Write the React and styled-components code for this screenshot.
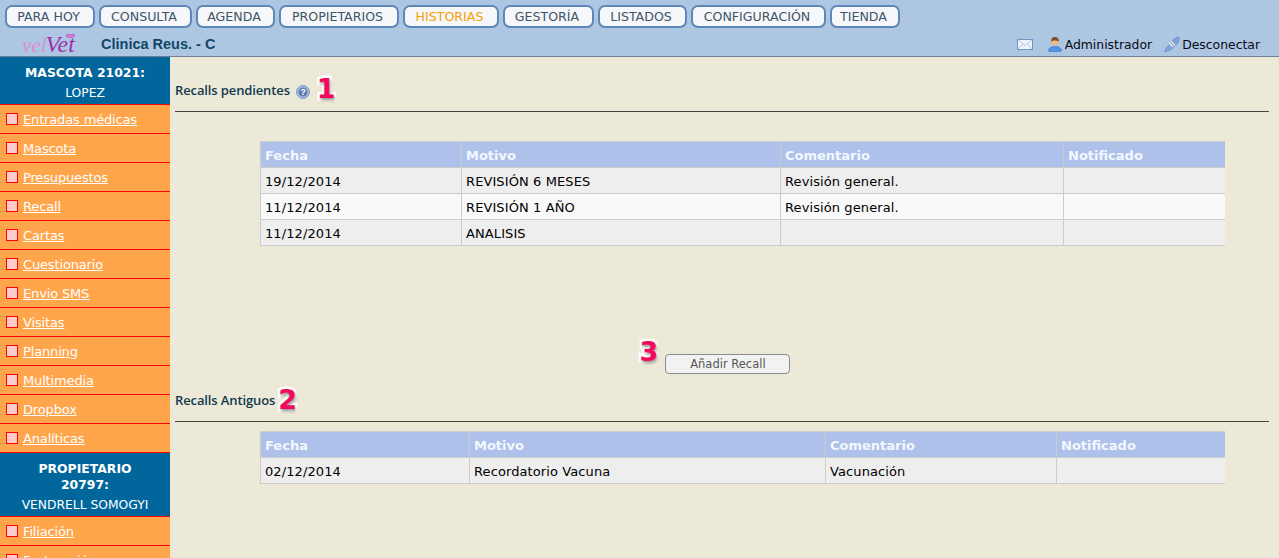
import React from "react";
import styled, { createGlobalStyle } from "styled-components";

const GlobalStyle = createGlobalStyle`
  html, body {
    margin: 0;
    padding: 0;
    height: 100%;
    overflow: hidden;
    background: #ece9d8;
    font-family: "DejaVu Sans", Verdana, sans-serif;
  }
`;

const Page = styled.div`
  height: 100vh;
  display: flex;
  flex-direction: column;
  overflow: hidden;
`;

const Header = styled.header`
  flex: none;
  height: 57px;
  box-sizing: border-box;
  background: #adc7e3;
  border-bottom: 1px solid #6b7f99;
`;

const Nav = styled.nav`
  display: flex;
  gap: 4px;
  padding: 5px 0 0 5px;
`;

const NavButton = styled.a`
  box-sizing: border-box;
  height: 23px;
  width: ${(p) => p.$w}px;
  padding-right: 3px;
  display: flex;
  align-items: center;
  justify-content: center;
  background: #f5f7fa;
  border: 2px solid #5f86b8;
  border-radius: 7px;
  font-family: "DejaVu Sans", sans-serif;
  font-size: 12.6px;
  color: ${(p) => (p.$active ? "#f5a100" : "#3f5566")};
`;

const SubBar = styled.div`
  display: flex;
  align-items: center;
  height: 28px;
  padding: 4px 19px 0 22px;
  box-sizing: border-box;
`;

const Logo = styled.div`
  position: relative;
  width: 79px;
  font-family: "Liberation Serif", serif;
  font-style: italic;
  color: #d98fd8;
  font-size: 21px;
  line-height: 24px;
  white-space: nowrap;
  span {
    color: #a02fae;
    font-size: 24px;
    margin-left: -1px;
  }
  svg {
    position: absolute;
    left: 43px;
    top: 1px;
  }
`;

const ClinicName = styled.div`
  flex: 1;
  font-family: "Liberation Sans", sans-serif;
  font-weight: 700;
  font-size: 14.5px;
  color: #0f4669;
`;

const UserLink = styled.div`
  display: flex;
  align-items: center;
  gap: ${(p) => p.$gap}px;
  margin-left: ${(p) => p.$ml}px;
  font-size: 12.4px;
  color: #0a0a14;
  svg {
    flex: none;
  }
`;

const Body = styled.div`
  flex: 1;
  display: flex;
  min-height: 0;
`;

const Sidebar = styled.aside`
  flex: none;
  width: 170px;
  background: #ffa64d;
`;

const SideTitle = styled.div`
  background: #00669c;
  color: #fff;
  text-align: center;
  padding: 8px 14px 3px;
  font-size: 12.3px;
  border-bottom: 1px solid #f00;
  strong {
    display: block;
    font-size: 12.4px;
    line-height: 16px;
    margin-bottom: 4px;
  }
  span {
    display: block;
    margin: 0 -14px;
    line-height: 16px;
  }
`;

const SideItem = styled.a`
  display: flex;
  align-items: center;
  box-sizing: border-box;
  height: 29px;
  padding-left: 6px;
  border-bottom: 1px solid #f00;
  font-size: 13px;
  letter-spacing: -0.15px;
  color: #fff;
  text-decoration: underline;
  &::before {
    content: "";
    box-sizing: border-box;
    width: 12px;
    height: 12px;
    margin-right: 5px;
    background: #ffcccc;
    border: 1px solid #f00;
  }
`;

const Content = styled.main`
  flex: 1;
  padding: 0 10px 0 5px;
  min-width: 0;
`;

const SectionHead = styled.div`
  display: flex;
  align-items: center;
  box-sizing: border-box;
  height: ${(p) => p.$h}px;
  padding: ${(p) => p.$pt}px 0 ${(p) => p.$pb}px;
  border-bottom: 1px solid #444;
  font-family: "Open Sans", sans-serif;
  font-weight: 600;
  font-size: 13px;
  letter-spacing: -0.12px;
  color: #123a4f;
`;

const Mark = styled.span`
  font-family: "DejaVu Sans", sans-serif;
  font-weight: 700;
  font-size: 27px;
  line-height: 28px;
  letter-spacing: 0;
  color: #f5095a;
  -webkit-text-stroke: 5px #fff;
  paint-order: stroke fill;
  text-shadow: 1px 2px 3px rgba(0, 0, 0, 0.45);
  margin-left: ${(p) => p.$ml}px;
  margin-top: ${(p) => p.$mt || 0}px;
`;

const HelpWrap = styled.svg`
  margin: 3px 0 0 6px;
  flex: none;
`;

const Grid = styled.table`
  border-collapse: collapse;
  table-layout: fixed;
  width: 964px;
  margin-left: 85px;
  margin-top: ${(p) => p.$mt}px;
  font-size: 13px;
  th,
  td {
    border: 1px solid #ccc;
    height: 26px;
    padding: 2px 4px 0;
    box-sizing: border-box;
    text-align: left;
    font-weight: 400;
    color: #000;
    letter-spacing: 0.1px;
  }
  th:last-child,
  td:last-child {
    border-right: none;
  }
  th {
    background: #adc1ea;
    color: #f4f7ff;
    font-weight: 700;
    letter-spacing: 0;
  }
  tbody tr:nth-child(odd) td {
    background: #eeeeee;
  }
  tbody tr:nth-child(even) td {
    background: #f9f9f9;
  }
`;

const ActionRow = styled.div`
  display: flex;
  justify-content: center;
  align-items: flex-start;
  margin-top: 92px;
  height: 42px;
  padding-right: 14px;
`;

const AddButton = styled.button`
  box-sizing: border-box;
  width: 125px;
  height: 20px;
  margin: 16px 0 0 7px;
  padding: 0;
  background: #f2f2f2;
  border: 1px solid #8c8c8c;
  border-radius: 4px;
  font-family: "DejaVu Sans", sans-serif;
  font-size: 11.5px;
  color: #555;
`;

const NAV = [
  ["PARA HOY", 90],
  ["CONSULTA", 93],
  ["AGENDA", 79],
  ["PROPIETARIOS", 120],
  ["HISTORIAS", 96, true],
  ["GESTORÍA", 91],
  ["LISTADOS", 89],
  ["CONFIGURACIÓN", 135],
  ["TIENDA", 70],
];

const PET_LINKS = [
  "Entradas médicas",
  "Mascota",
  "Presupuestos",
  "Recall",
  "Cartas",
  "Cuestionario",
  "Envio SMS",
  "Visitas",
  "Planning",
  "Multimedia",
  "Dropbox",
  "Analíticas",
];

const PENDING = [
  ["19/12/2014", "REVISIÓN 6 MESES", "Revisión general.", ""],
  ["11/12/2014", "REVISIÓN 1 AÑO", "Revisión general.", ""],
  ["11/12/2014", "ANALISIS", "", ""],
];

const OLD = [["02/12/2014", "Recordatorio Vacuna", "Vacunación", ""]];

const Lips = () => (
  <svg width="11" height="6" viewBox="0 0 11 6">
    <path d="M0.500 3C2 0.500 4 0.500 5.500 1.500 7 0.500 9 0.500 10.500 3 8.500 5.500 2.500 5.500 0.500 3z" fill="#c04fc0" />
    <path d="M2 3h7" stroke="#edc9ee" strokeWidth="0.8" />
  </svg>
);

const MailIcon = () => (
  <svg width="16" height="11" viewBox="0 0 16 11">
    <rect x="0.5" y="0.5" width="15" height="10" fill="#eef4fc" stroke="#6f94c8" />
    <path d="M1 1l7 5.500 7-5.500M1 10l5-5M15 10l-5-5" fill="none" stroke="#b4cbe9" />
  </svg>
);

const UserIcon = () => (
  <svg width="14" height="16" viewBox="0 0 14 16">
    <path d="M0.500 15c0-1 0-2 1.500-3 1-1 2.500-1.500 5-1.500s4 .5 5 1.500c1.500 1 1.500 2 1.500 3-2 1-11 1-13 0z" fill="#4f94e8" stroke="#3a6fb5" strokeWidth="0.6" />
    <circle cx="7" cy="6" r="3.500" fill="#f0b98c" />
    <path d="M3.300 5.500C3 2 4.800 1 7 1s4 1 3.700 4.500C9 4 5 4 3.300 5.500z" fill="#8a4a25" />
  </svg>
);

const PlugIcon = () => (
  <svg width="16" height="17" viewBox="0 0 16 17">
    <path d="M0.500 16L2 12l3-3 5-6 4-2.500 1.500 1.500-1.500 5-5 5-3.500 2.500z" fill="#7fa4dc" stroke="#5b7fb8" strokeWidth="0.5" />
    <path d="M5 7l4 4M7 5.500l4 4" stroke="#e4e8ee" strokeWidth="1.500" />
  </svg>
);

const HelpIcon = () => (
  <HelpWrap width="14" height="14" viewBox="0 0 14 14">
    <circle cx="7" cy="7" r="6.500" fill="#a8bcd9" stroke="#7d9cc9" />
    <circle cx="7" cy="7" r="4.500" fill="#5f7fb5" />
    <text x="7" y="10" fontSize="8.500" fontWeight="700" fill="#fff" textAnchor="middle" fontFamily="Liberation Sans">?</text>
  </HelpWrap>
);

function RecallTable({ rows, widths, mt }) {
  return (
    <Grid $mt={mt}>
      <colgroup>
        {widths.map((w, i) => (
          <col key={i} width={w} />
        ))}
      </colgroup>
      <thead>
        <tr>
          <th>Fecha</th>
          <th>Motivo</th>
          <th>Comentario</th>
          <th>Notificado</th>
        </tr>
      </thead>
      <tbody>
        {rows.map((r, i) => (
          <tr key={i}>
            {r.map((c, j) => (
              <td key={j}>{c}</td>
            ))}
          </tr>
        ))}
      </tbody>
    </Grid>
  );
}

export default function App() {
  return (
    <Page>
      <GlobalStyle />
      <Header>
        <Nav>
          {NAV.map(([label, w, active]) => (
            <NavButton key={label} $w={w} $active={active}>
              {label}
            </NavButton>
          ))}
        </Nav>
        <SubBar>
          <Logo>
            vel<span>Vet</span>
            <Lips />
          </Logo>
          <ClinicName>Clinica Reus. - C</ClinicName>
          <MailIcon />
          <UserLink $ml={15} $gap={3}>
            <UserIcon />
            Administrador
          </UserLink>
          <UserLink $ml={12} $gap={2}>
            <PlugIcon />
            Desconectar
          </UserLink>
        </SubBar>
      </Header>
      <Body>
        <Sidebar>
          <SideTitle>
            <strong>MASCOTA 21021:</strong>
            <span>LOPEZ</span>
          </SideTitle>
          {PET_LINKS.map((l) => (
            <SideItem key={l}>{l}</SideItem>
          ))}
          <SideTitle>
            <strong>PROPIETARIO 20797:</strong>
            <span>VENDRELL SOMOGYI</span>
          </SideTitle>
          <SideItem>Filiación</SideItem>
          <SideItem>Facturación</SideItem>
        </Sidebar>
        <Content>
          <SectionHead $h={55} $pt={20} $pb={8}>
            Recalls pendientes
            <HelpIcon />
            <Mark $ml={7} $mt={-3}>1</Mark>
          </SectionHead>
          <RecallTable rows={PENDING} widths={[201, 319, 283, 161]} mt={29} />
          <ActionRow>
            <Mark $ml={0}>3</Mark>
            <AddButton>Añadir Recall</AddButton>
          </ActionRow>
          <SectionHead $h={42} $pt={0} $pb={1}>
            Recalls Antiguos
            <Mark $ml={3}>2</Mark>
          </SectionHead>
          <RecallTable rows={OLD} widths={[209, 356, 231, 168]} mt={9} />
        </Content>
      </Body>
    </Page>
  );
}
